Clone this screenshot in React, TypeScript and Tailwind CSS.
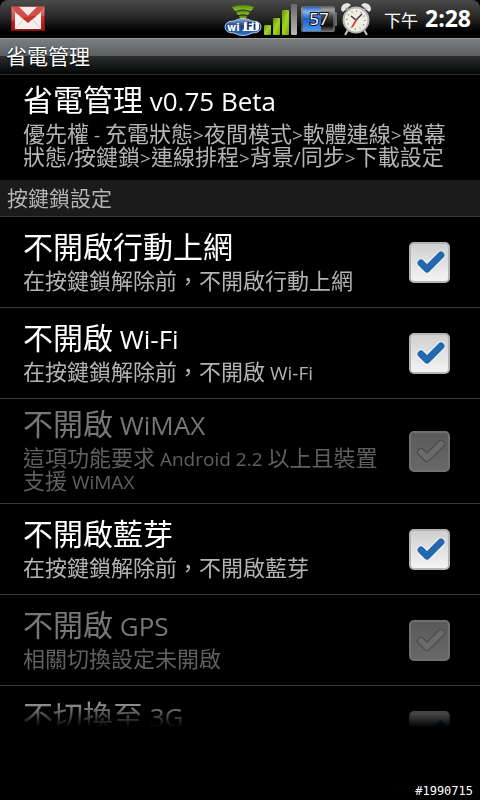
import { useState, type ReactNode } from "react";

function GmailIcon() {
  return (
    <svg width="34" height="26" viewBox="0 0 34 26" aria-label="Gmail" role="img">
      <defs>
        <linearGradient id="gm" x1="0" y1="0" x2="0" y2="1">
          <stop offset="0" stopColor="#d9706a" />
          <stop offset="0.5" stopColor="#c42c27" />
          <stop offset="1" stopColor="#a81512" />
        </linearGradient>
      </defs>
      <rect x="0.5" y="0.5" width="33" height="24" fill="url(#gm)" stroke="#8c1a17" strokeWidth="0.6" />
      <path d="M4 5V23H30V5L17 15Z" fill="#f4f0f0" />
      <path d="M8 1H26L17 10Z" fill="#f1e4e3" />
      <path d="M4 23L13 13M30 23L21 13" stroke="#d8cccc" strokeWidth="1" />
      <path d="M1 1H8L17 10L26 1H33L29 7L17 17L5 7Z" fill="#c8302a" />
      <path d="M0 0H34V10Q17 9 0 15Z" fill="#fff" opacity="0.15" />
    </svg>
  );
}

function WifiIcon() {
  return (
    <svg width="38" height="34" viewBox="0 0 38 34" aria-label="Wi-Fi" role="img">
      <defs>
        <linearGradient id="wf" x1="0" y1="0" x2="0" y2="1">
          <stop offset="0" stopColor="#8aa8d8" />
          <stop offset="0.45" stopColor="#1c3f80" />
          <stop offset="1" stopColor="#2f78d0" />
        </linearGradient>
        <linearGradient id="wg" x1="0" y1="0" x2="0" y2="1">
          <stop offset="0" stopColor="#4f8a0c" />
          <stop offset="1" stopColor="#93c81e" />
        </linearGradient>
      </defs>
      <path d="M8 5Q19 1 30 5L27 9Q19 6 11 9Z" fill="url(#wg)" />
      <path d="M12 10Q19 7.500 26 10L24 13Q19 11.500 14 13Z" fill="url(#wg)" />
      <path d="M15 14Q19 13 23 14L21 18H17Z" fill="url(#wg)" />
      <path d="M10 19Q19 14 28 19Q37 19 37 25Q37 31 28 31Q19 36 10 31Q1 31 1 25Q1 19 10 19Z" fill="url(#wf)" stroke="#b9c8e2" strokeWidth="1" />
      <path d="M21 20H32Q35 20 35 23V26Q35 29 32 29H18Q20 28 20 26V22Q20 20 21 20Z" fill="#fff" />
      <text x="3" y="29" fontSize="10" fontWeight="700" fill="#fff" fontFamily="DejaVu Sans, sans-serif">wi</text>
      <text x="22" y="28" fontSize="10" fontWeight="700" fill="#173a74" fontFamily="DejaVu Sans, sans-serif">Fi</text>
    </svg>
  );
}

function SignalIcon() {
  return (
    <svg width="34" height="32" viewBox="0 0 34 32" aria-label="Signal" role="img">
      <defs>
        <linearGradient id="sg" x1="0" y1="0" x2="1" y2="1">
          <stop offset="0" stopColor="#5d9708" />
          <stop offset="0.5" stopColor="#a4d420" />
          <stop offset="1" stopColor="#6ba80c" />
        </linearGradient>
        <linearGradient id="sx" x1="0" y1="0" x2="0" y2="1">
          <stop offset="0" stopColor="#6a6a6a" />
          <stop offset="1" stopColor="#b8b8b8" />
        </linearGradient>
      </defs>
      <rect x="0" y="22" width="7" height="10" rx="1" fill="url(#sg)" />
      <rect x="9" y="15" width="7" height="17" rx="1" fill="url(#sg)" />
      <rect x="18" y="7" width="7" height="25" rx="1" fill="url(#sg)" />
      <rect x="27" y="1" width="6" height="31" rx="1" fill="url(#sx)" />
    </svg>
  );
}

function BatteryIcon() {
  return (
    <svg width="38" height="28" viewBox="0 0 38 28" aria-label="57%" role="img">
      <defs>
        <linearGradient id="bt" x1="0" y1="0" x2="0" y2="1">
          <stop offset="0" stopColor="#5a5a5a" />
          <stop offset="0.15" stopColor="#a2a2a2" />
          <stop offset="0.45" stopColor="#3a3a3a" />
          <stop offset="0.75" stopColor="#0c0c0c" />
          <stop offset="1" stopColor="#777" />
        </linearGradient>
        <linearGradient id="bb" x1="0" y1="0" x2="0" y2="1">
          <stop offset="0" stopColor="#2b66b8" />
          <stop offset="0.2" stopColor="#86b6f2" />
          <stop offset="0.5" stopColor="#1d5fd0" />
          <stop offset="1" stopColor="#4b98f0" />
        </linearGradient>
      </defs>
      <rect x="34" y="7" width="3" height="14" rx="1" fill="#6c6c6c" />
      <rect x="1" y="1" width="34" height="26" rx="2" fill="url(#bt)" />
      <rect x="3" y="2" width="18" height="24" fill="url(#bb)" />
      <path d="M2 3V25M34 3V25" stroke="#8c8c8c" strokeWidth="1" />
      <text x="19" y="20" textAnchor="middle" fontSize="17" fill="#fff" stroke="#111" strokeWidth="2" paintOrder="stroke" fontFamily="Open Sans, sans-serif">57</text>
    </svg>
  );
}

function AlarmIcon() {
  return (
    <svg width="32" height="34" viewBox="0 0 32 34" aria-label="Alarm" role="img">
      <path d="M8 28L5 33M24 28L27 33" stroke="#ccc" strokeWidth="2" />
      <path d="M1 8Q1 1 8 1L11 3L3 10Z" fill="#e4e4e4" />
      <path d="M31 8Q31 1 24 1L21 3L29 10Z" fill="#e4e4e4" />
      <path d="M6 6L9 9M26 6L23 9" stroke="#999" strokeWidth="2" />
      <circle cx="16" cy="18" r="12.500" fill="#f0ede2" stroke="#b5b5b5" strokeWidth="2" />
      <circle cx="16" cy="18" r="9" fill="none" stroke="#8a8a80" strokeWidth="1.500" strokeDasharray="1 3.700" />
      <path d="M11 14L16 18L22 12" stroke="#333" strokeWidth="1.400" fill="none" />
      <path d="M17 17L12 25" stroke="#e0342a" strokeWidth="1.600" />
    </svg>
  );
}

function Latin({ children }: { children: ReactNode }) {
  return <span className="font-['Open_Sans',sans-serif] text-[26px] leading-[0px]">{children}</span>;
}

function SmallLatin({ children }: { children: ReactNode }) {
  return <span className="font-['Open_Sans',sans-serif] text-[19px] leading-[0px]">{children}</span>;
}

type RowProps = {
  id: string;
  title: ReactNode;
  summary?: ReactNode;
  disabled?: boolean;
};

function CheckRow({ id, title, summary, disabled = false }: RowProps) {
  const [checked, setChecked] = useState(true);
  return (
    <label
      htmlFor={id}
      className={`flex min-h-[91px] shrink-0 items-center border-b border-[#3a3a3a] pr-[30px] pl-[23px] ${disabled ? "text-[#777777]" : "text-white"}`}
    >
      <span className="flex flex-1 flex-col gap-[11px] pt-[11px] pr-6 pb-[12px]">
        <span className="text-[30px] leading-[24px]">{title}</span>
        <span className={`min-h-[23px] text-[22px] leading-[23px] ${disabled ? "text-[#606060]" : "text-[#b4b4b4]"}`}>{summary}</span>
      </span>
      <span className="grid shrink-0">
        <input
          id={id}
          type="checkbox"
          checked={checked}
          disabled={disabled}
          onChange={(e) => setChecked(e.target.checked)}
          className="col-start-1 row-start-1 size-[41px] appearance-none rounded-[5px] border-2 border-[#b4b4b4] bg-linear-to-b from-[#cfcfcf] to-[#f4f4f4] disabled:border-[#707070] disabled:from-[#5a5a5a] disabled:to-[#686868]"
        />
        {checked && (
          <svg viewBox="0 0 41 41" className="pointer-events-none col-start-1 row-start-1 size-[41px]" fill="none" strokeLinecap="round" strokeLinejoin="round" aria-hidden="true">
            <path d="M12 21L18 27L32 13" stroke={disabled ? "#474747" : "#f4f8fc"} strokeWidth={disabled ? 8 : 9} />
            <path d="M12 21L18 27L32 13" stroke={disabled ? "#6a6a6a" : "#2468ad"} strokeWidth={disabled ? 6 : 7} />
          </svg>
        )}
      </span>
    </label>
  );
}

export default function App() {
  return (
    <div className="flex h-screen flex-col bg-black font-['Noto_Sans_CJK_TC',sans-serif] text-white">
      <header className="flex h-[38px] shrink-0 items-center rounded-t-lg bg-linear-to-b from-[#4b4b4b] via-[#242424] to-black pr-[9px] pl-[11px]">
        <GmailIcon />
        <div className="ml-auto flex items-center gap-[2px]">
          <WifiIcon />
          <SignalIcon />
          <BatteryIcon />
          <AlarmIcon />
          <div className="ml-[10px] flex items-baseline gap-[7px] leading-[36px]">
            <span className="text-[17px]">下午</span>
            <span className="font-['Open_Sans',sans-serif] text-[23px] font-bold">2:28</span>
          </div>
        </div>
      </header>

      <div className="flex h-[37px] shrink-0 items-center border-t border-b border-t-[#999] border-b-[#303030] bg-[linear-gradient(#7b7e81,#5b5e60_50%,#2a2e2f_50%,#050606)] pb-[2px] pl-[6px]">
        <h1 className="text-[21px] leading-[33px] text-shadow-[0_1px_2px_#000]">省電管理</h1>
      </div>

      <main className="flex flex-1 flex-col overflow-hidden mask-[linear-gradient(to_top,transparent,black_40px)]">
        <section className="flex shrink-0 flex-col gap-[11px] pt-[11px] pr-6 pb-[13px] pl-[23px]">
          <h2 className="text-[30px] leading-[24px]">
            省電管理 <Latin>v0.75 Beta</Latin>
          </h2>
          <p className="text-[22px] leading-[23px] text-[#b4b4b4]">
            優先權 <SmallLatin>-</SmallLatin> 充電狀態<SmallLatin>&gt;</SmallLatin>夜間模式<SmallLatin>&gt;</SmallLatin>軟體連線<SmallLatin>&gt;</SmallLatin>螢幕
            <br />
            狀態<SmallLatin>/</SmallLatin>按鍵鎖<SmallLatin>&gt;</SmallLatin>連線排程<SmallLatin>&gt;</SmallLatin>背景<SmallLatin>/</SmallLatin>同步<SmallLatin>&gt;</SmallLatin>下載設定
          </p>
        </section>

        <h3 className="h-[37px] shrink-0 border-b border-[#3a3a3a] bg-[#1b1b1b] pl-[7px] text-[21px] leading-[35px] text-[#b4b4b4]">按鍵鎖設定</h3>

        <CheckRow id="mobile" title="不開啟行動上網" summary="在按鍵鎖解除前，不開啟行動上網" />
        <CheckRow
          id="wifi"
          title={<>不開啟 <Latin>Wi-Fi</Latin></>}
          summary={<>在按鍵鎖解除前，不開啟 <SmallLatin>Wi-Fi</SmallLatin></>}
        />
        <CheckRow
          id="wimax"
          disabled
          title={<>不開啟 <Latin>WiMAX</Latin></>}
          summary={<>這項功能要求 <SmallLatin>Android 2.2</SmallLatin> 以上且裝置支援 <SmallLatin>WiMAX</SmallLatin></>}
        />
        <CheckRow id="bluetooth" title="不開啟藍芽" summary="在按鍵鎖解除前，不開啟藍芽" />
        <CheckRow id="gps" disabled title={<>不開啟 <Latin>GPS</Latin></>} summary="相關切換設定未開啟" />
        <CheckRow id="umts" title={<>不切換至 <Latin>3G</Latin></>} />
      </main>

      <footer className="flex h-[73px] shrink-0 items-end justify-end pr-[7px] pb-[2px] font-['DejaVu_Sans_Mono',monospace] text-[12px] leading-[13px]">#1990715</footer>
    </div>
  );
}
